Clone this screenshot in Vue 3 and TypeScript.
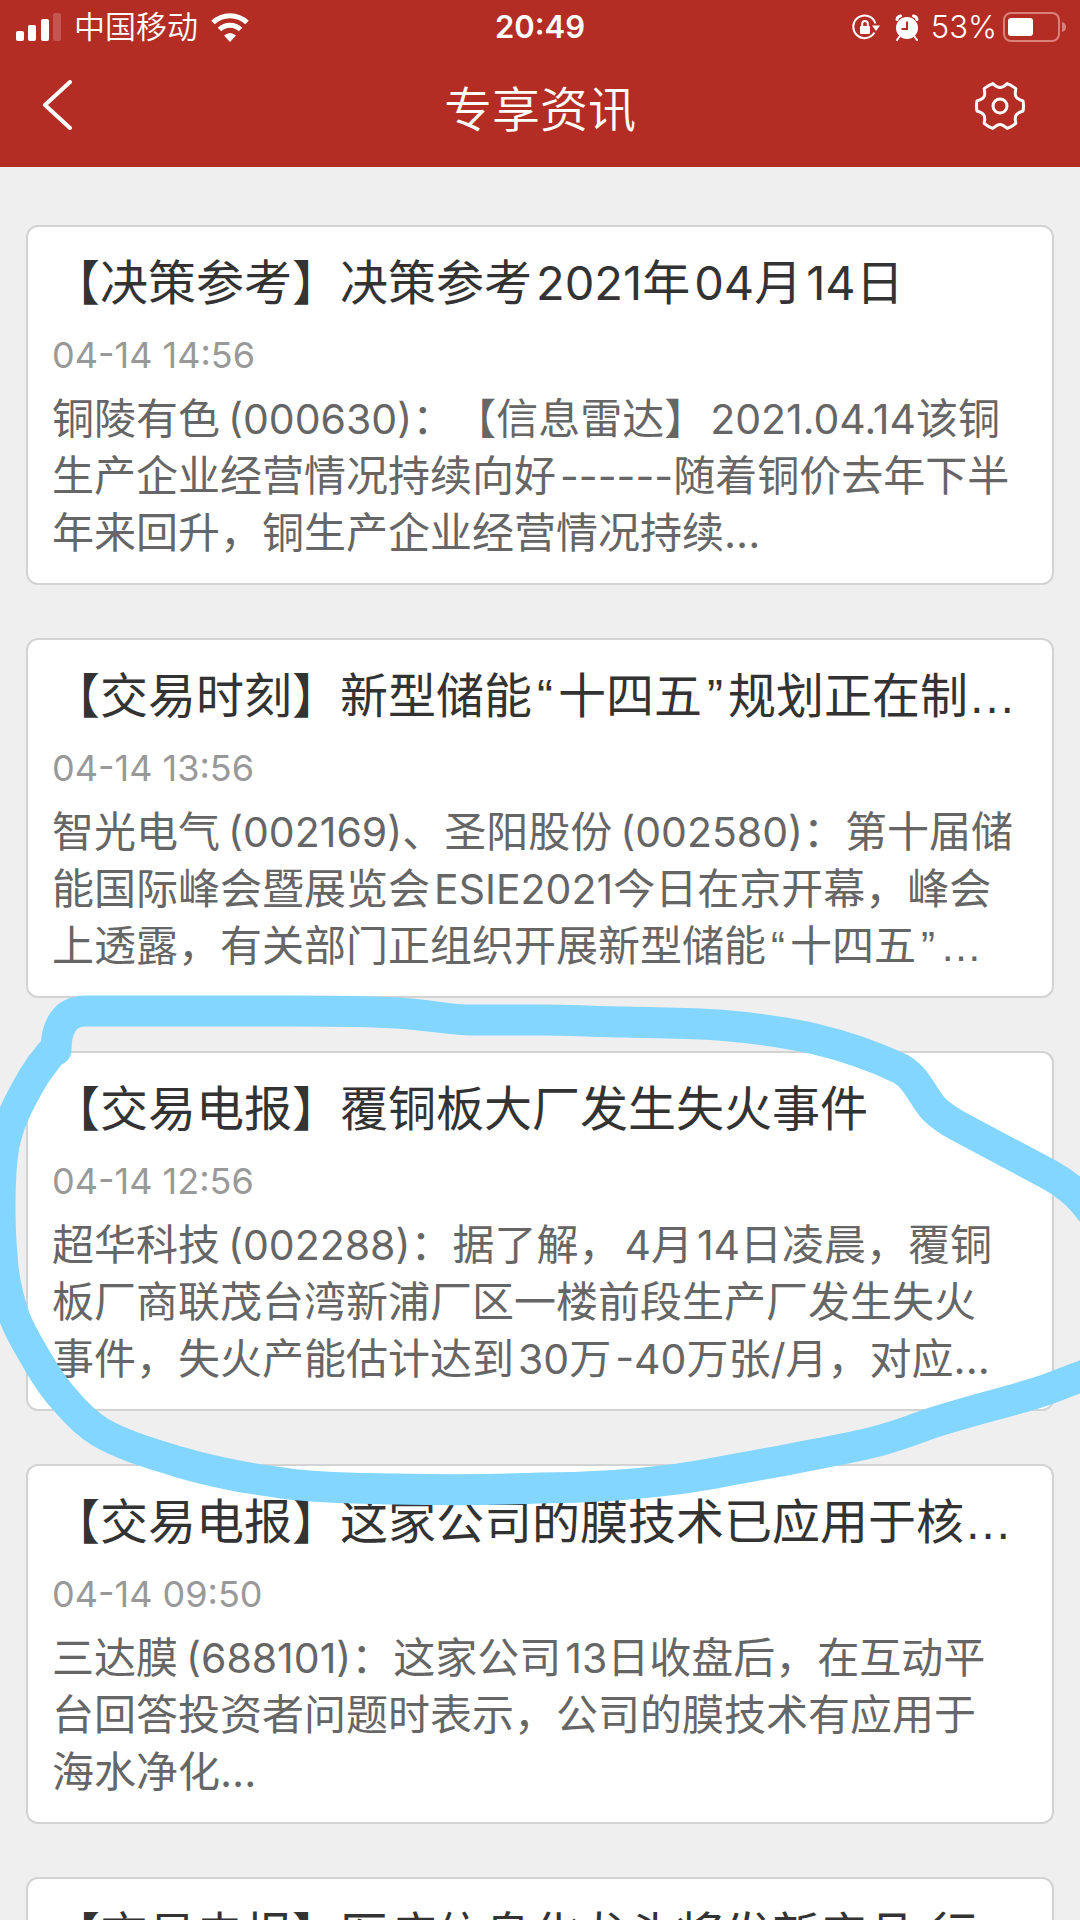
<script setup lang="ts">
interface Article {
  id: number
  title: string
  time: string
  summary: string[]
}

interface Segment {
  text: string
  kind: 'plain' | 'latin' | 'code' | 'quote' | 'dots'
}

const articles: Article[] = [
  {
    id: 1,
    title: '【决策参考】决策参考2021年04月14日',
    time: '04-14 14:56',
    summary: [
      '铜陵有色(000630)：【信息雷达】2021.04.14该铜',
      '生产企业经营情况持续向好------随着铜价去年下半',
      '年来回升，铜生产企业经营情况持续...',
    ],
  },
  {
    id: 2,
    title: '【交易时刻】新型储能“十四五”规划正在制…',
    time: '04-14 13:56',
    summary: [
      '智光电气(002169)、圣阳股份(002580)：第十届储',
      '能国际峰会暨展览会ESIE2021今日在京开幕，峰会',
      '上透露，有关部门正组织开展新型储能“十四五”…',
    ],
  },
  {
    id: 3,
    title: '【交易电报】覆铜板大厂发生失火事件',
    time: '04-14 12:56',
    summary: [
      '超华科技(002288)：据了解，4月14日凌晨，覆铜',
      '板厂商联茂台湾新浦厂区一楼前段生产厂发生失火',
      '事件，失火产能估计达到30万-40万张/月，对应...',
    ],
  },
  {
    id: 4,
    title: '【交易电报】这家公司的膜技术已应用于核…',
    time: '04-14 09:50',
    summary: [
      '三达膜(688101)：这家公司13日收盘后，在互动平',
      '台回答投资者问题时表示，公司的膜技术有应用于',
      '海水净化...',
    ],
  },
  {
    id: 5,
    title: '【交易电报】医疗信息化龙头将发新产品 行…',
    time: '04-14 09:20',
    summary: [],
  },
]

// Splits a text so that stock codes, Latin runs, quotes and ellipses get their own spacing.
function segments(text: string): Segment[] {
  return text
    .split(/(\(\d+\)|[0-9A-Z-][0-9A-Z.-]*|[“”]|…)/)
    .filter((part) => part !== '')
    .map((part): Segment => {
      if (part === '…') return { text: part, kind: 'dots' }
      if (/^[“”]$/.test(part)) return { text: part, kind: 'quote' }
      if (/^\(\d+\)$/.test(part)) return { text: part, kind: 'code' }
      if (/^[0-9A-Z-]/.test(part)) return { text: part, kind: 'latin' }
      return { text: part, kind: 'plain' }
    })
}

// Six-lobed gear outline: one lobe and the hollow after it, turned in 60° steps.
function gearPath(): string {
  const turn = (x: number, y: number, step: number): string => {
    const a = (step * Math.PI) / 3
    const px = x * Math.cos(a) - y * Math.sin(a)
    const py = x * Math.sin(a) + y * Math.cos(a)
    return `${px.toFixed(2)} ${py.toFixed(2)}`
  }
  let d = `M${turn(23, -5, 0)}`
  for (let i = 0; i < 6; i++) {
    d += `Q${turn(24, 0, i)} ${turn(23, 5, i)}`
    d += `C${turn(15.5, 7.5, i)} ${turn(14.2, 9.7, i)} ${turn(23, -5, i + 1)}`
  }
  return d + 'Z'
}
const gear = gearPath()
</script>

<template>
  <div class="page" lang="zh-CN">
    <header class="header">
      <div class="status">
        <div class="status-side">
          <svg class="signal" width="46" height="28" viewBox="0 0 46 28" aria-hidden="true">
            <rect x="0" y="18" width="8" height="10" rx="2" />
            <rect x="12" y="12" width="8" height="16" rx="2" />
            <rect x="25" y="6" width="8" height="22" rx="2" />
            <rect x="37" y="0" width="8" height="28" rx="2" opacity="0.2" />
          </svg>
          <span class="carrier">中国移动</span>
          <svg class="wifi" width="40" height="30" viewBox="0 0 40 30" aria-hidden="true">
            <path d="M3 10.500A24.500 24.500 0 0 1 37 10.500" />
            <path d="M9.500 17.500A15 15 0 0 1 30.500 17.500" />
            <path class="dot" d="M20 30L14 23.500Q20 18.500 26 23.500Z" />
          </svg>
        </div>
        <time class="clock">20:49</time>
        <div class="status-side end">
          <svg class="lock" width="28" height="26" viewBox="0 0 28 26" aria-hidden="true">
            <path class="ring" d="M22.400 18.500A11.300 11.300 0 1 1 23.400 9.500" />
            <path d="M20 11.500H28L24 17Z" />
            <rect x="8" y="12" width="10" height="8" rx="1" />
            <path class="shackle" d="M10.200 12V9.800a2.800 2.800 0 0 1 5.600 0V12" />
          </svg>
          <svg class="alarm" width="24" height="27" viewBox="0 0 24 27" aria-hidden="true">
            <circle cx="12" cy="14" r="11" />
            <path class="bell" d="M2 5.500A4 4 0 0 1 5.500 2M18.500 2A4 4 0 0 1 22 5.500" />
            <path class="leg" d="M4.500 22.500L2 26M19.500 22.500L22 26" />
            <path class="hand" d="M12 7.500V15H6.500" />
          </svg>
          <span class="percent">53%</span>
          <svg class="battery" width="64" height="30" viewBox="0 0 64 30" aria-hidden="true">
            <rect class="shell" x="1" y="1" width="55" height="28" rx="7" />
            <rect x="5" y="6" width="25" height="18" rx="3" />
            <path class="cap" d="M59 10Q63 11 63 15T59 20Z" />
          </svg>
        </div>
      </div>
      <nav class="nav">
        <button class="icon-button" type="button" aria-label="返回">
          <svg width="32" height="52" viewBox="0 0 32 52" aria-hidden="true">
            <path d="M30 2L5 25L30 48" />
          </svg>
        </button>
        <h1 class="heading">专享资讯</h1>
        <button class="icon-button settings" type="button" aria-label="设置">
          <svg width="52" height="52" viewBox="-26 -26 52 52" aria-hidden="true">
            <path class="thin" :d="gear" />
            <circle class="thin" r="7" />
          </svg>
        </button>
      </nav>
    </header>

    <main class="feed">
      <div class="canvas">
        <article v-for="item in articles" :key="item.id" class="card">
          <h2 class="title"><span v-for="(part, i) in segments(item.title)" :key="i" :class="part.kind">{{ part.text }}</span></h2>
          <time class="time">{{ item.time }}</time>
          <p class="summary">
            <span v-for="(line, n) in item.summary" :key="n" class="line"><span v-for="(part, i) in segments(line)" :key="i" :class="part.kind">{{ part.text }}</span></span>
          </p>
        </article>

        <!-- Freehand marker loop round the third article -->
        <svg class="marker" viewBox="0 167 1080 1753" aria-hidden="true">
          <path
            d="M56 1050C56 1028 64 1011 86 1011H293C330 1011 380 1011 410 1014C435 1016 450 1020 472 1020H540C570 1020 600 1022 626 1022C660 1023 690 1023 719 1025C755 1028 785 1032 815 1039C845 1046 878 1058 901 1069C918 1079 922 1096 934 1109C941 1116 949 1121 958 1126L1050 1175C1064 1183 1074 1190 1084 1202L1130 1260L1120 1360L1080 1377C1065 1382 1050 1389 1036 1393C1000 1404 965 1412 929 1424C910 1431 892 1438 870 1443C840 1450 810 1455 781 1461C745 1467 715 1474 678 1479C632 1485 585 1488 540 1488C490 1490 440 1490 396 1489C350 1488 310 1488 269 1481C238 1477 210 1471 179 1462C150 1453 122 1445 100 1432C87 1424 76 1413 65 1400C55 1389 46 1376 38 1362C30 1348 20 1333 14 1316C8 1298 3 1276 2 1255C0 1235 0 1220 0 1204C0 1184 1 1162 4 1145C7 1132 10 1123 14 1114C20 1100 27 1088 34 1076C40 1067 45 1061 50 1054"
          />
        </svg>
      </div>
    </main>
  </div>
</template>

<style>
body {
  margin: 0;
  background: #efefef;
}
</style>

<style scoped>
.page {
  display: flex;
  flex-direction: column;
  height: 100vh;
  overflow: hidden;
  background: #efefef;
  color: #333;
  font-family: Inter, 'Noto Sans CJK SC', sans-serif;
  text-spacing-trim: space-all;
}

.header {
  flex: none;
  background: #b32d25;
  color: #fff;
}

.status {
  display: grid;
  grid-template-columns: 1fr auto 1fr;
  align-items: center;
  height: 54px;
  padding: 0 16px;
  font-size: 31px;
  line-height: 40px;
}

.status-side {
  display: flex;
  align-items: center;
}

.status-side.end {
  justify-content: flex-end;
}

.status svg {
  fill: #fff;
}

.carrier {
  margin: 0 12px;
  font-weight: 350;
}

.wifi path {
  fill: none;
  stroke: #fff;
  stroke-width: 5;
}

.wifi .dot {
  fill: #fff;
  stroke: none;
}

.clock {
  font-weight: 600;
}

.percent {
  font-weight: 350;
}

.lock .ring,
.lock .shackle {
  fill: none;
  stroke: #fff;
  stroke-width: 2;
}

.alarm {
  margin: 0 12px 0 15px;
}

.alarm .bell,
.alarm .leg {
  fill: none;
  stroke: #fff;
  stroke-width: 3;
  stroke-linecap: round;
}

.alarm .leg {
  stroke-width: 2;
}

.alarm .hand {
  fill: none;
  stroke: #b32d25;
  stroke-width: 2;
}

.battery {
  margin-left: 6px;
  margin-right: -3px;
}

.battery .shell {
  fill: none;
  stroke: #d9817b;
  stroke-width: 2;
}

.battery .cap {
  fill: #d9817b;
}

.nav {
  display: grid;
  grid-template-columns: 1fr auto 1fr;
  align-items: start;
  box-sizing: border-box;
  height: 113px;
  padding: 26px 40px 0;
}

.heading {
  margin: 0;
  font-size: 48px;
  font-weight: 350;
  line-height: 60px;
}

.icon-button {
  display: flex;
  width: 52px;
  padding: 0;
  border: 0;
  background: none;
}

.icon-button path,
.icon-button circle {
  fill: none;
  stroke: #fff;
  stroke-width: 4;
  stroke-linecap: round;
  stroke-linejoin: round;
}

.icon-button .thin {
  stroke-width: 3;
}

.settings {
  justify-self: end;
  margin-right: 14px;
}

.feed {
  flex: 1;
  min-height: 0;
  overflow-y: auto;
  scrollbar-width: none;
}

.canvas {
  position: relative;
  display: flex;
  flex-direction: column;
  gap: 53px;
  padding: 58px 26px;
}

.card {
  box-sizing: border-box;
  padding: 26px 24px 22px;
  border: 2px solid #d3d3d3;
  border-radius: 12px;
  background: #fff;
}

.title {
  margin: 0 0 18px;
  overflow: hidden;
  font-size: 48px;
  font-weight: 400;
  line-height: 60px;
  white-space: pre;
}

.time {
  display: block;
  margin-bottom: 11px;
  color: #999;
  font-size: 36px;
  line-height: 48px;
}

.summary {
  min-height: 171px;
  margin: 0;
  color: #666;
  font-size: 42px;
  line-height: 57px;
}

.line {
  display: block;
  white-space: nowrap;
}

.latin,
.code {
  margin-left: 4px;
  line-height: 1;
}

.code {
  margin-left: 8px;
}

.title .latin {
  font-size: 47px;
}

.summary .latin,
.summary .code {
  font-size: 41px;
}

.quote {
  margin: 0 5px;
  font-family: 'Liberation Sans', sans-serif;
  line-height: 1;
}

.dots {
  font-family: 'Liberation Sans', sans-serif;
  line-height: 1;
}

.marker {
  position: absolute;
  top: 0;
  left: 0;
  width: 100%;
  pointer-events: none;
}

.marker path {
  fill: none;
  stroke: #82d6ff;
  stroke-width: 31;
  stroke-linecap: round;
  stroke-linejoin: round;
}
</style>
